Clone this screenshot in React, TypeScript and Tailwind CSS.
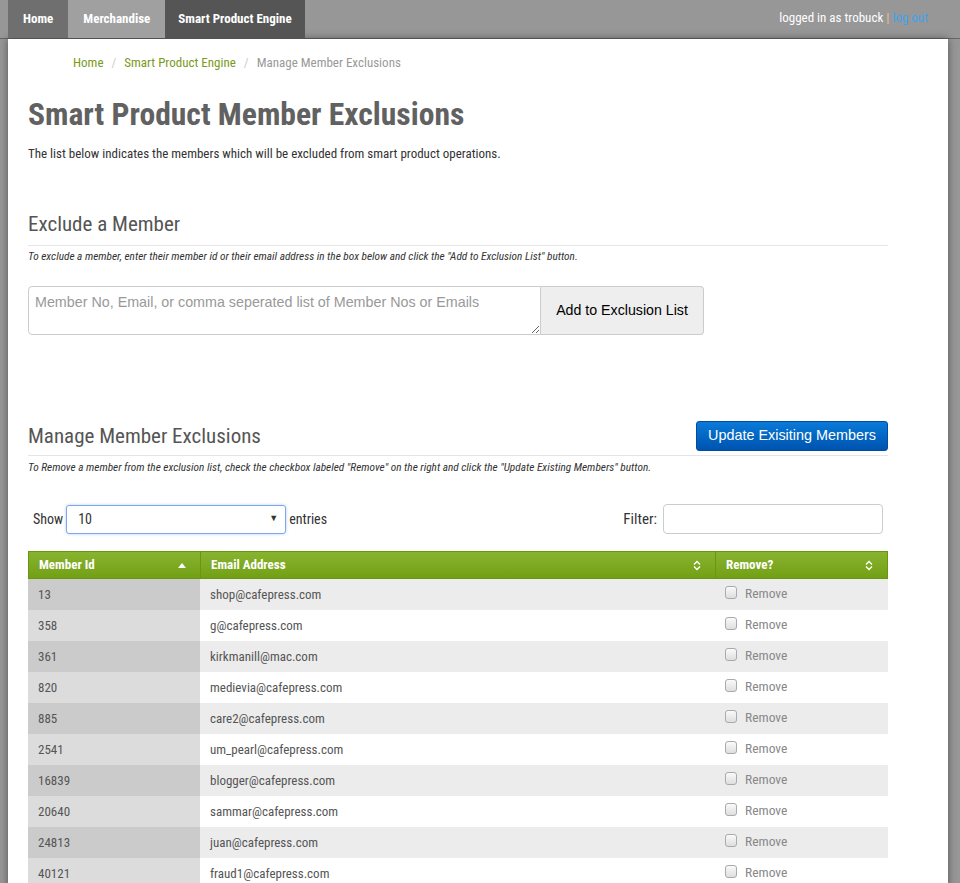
import React from "react";

const rows: [string, string][] = [
  ["13", "shop@cafepress.com"],
  ["358", "g@cafepress.com"],
  ["361", "kirkmanill@mac.com"],
  ["820", "medievia@cafepress.com"],
  ["885", "care2@cafepress.com"],
  ["2541", "um_pearl@cafepress.com"],
  ["16839", "blogger@cafepress.com"],
  ["20640", "sammar@cafepress.com"],
  ["24813", "juan@cafepress.com"],
  ["40121", "fraud1@cafepress.com"],
];

const cond = "font-['Roboto_Condensed','Roboto',sans-serif]";
const arial = "font-['Liberation_Sans',Arial,sans-serif]";

function SortBoth() {
  return (
    <svg width="8" height="11" viewBox="0 0 8 11" className="shrink-0">
      <path d="M1 4.5 L4 1.5 L7 4.5" fill="none" stroke="#fff" strokeWidth="1.3" />
      <path d="M1 6.5 L4 9.5 L7 6.5" fill="none" stroke="#fff" strokeWidth="1.3" />
    </svg>
  );
}

export default function App() {
  return (
    <div className={`min-h-[883px] bg-[#979797] ${cond}`}>
      {/* Top nav */}
      <div className="h-[39px] flex items-stretch justify-between border-b border-[#666] bg-[#979797]">
        <div className="flex pl-[8px]">
          <div className="px-[15px] flex items-center bg-[#6f6f6f] text-white text-[13px] font-bold">Home</div>
          <div className="px-[15px] flex items-center bg-[#a0a0a0] text-white text-[13px] font-bold">Merchandise</div>
          <div className="px-[13px] flex items-center bg-[#555555] text-white text-[13px] font-bold">Smart Product Engine</div>
        </div>
        <div className="flex items-center pr-[32px] text-[13px] text-white pb-[2px]">
          <span>logged in as trobuck</span>
          <span className="text-[#e8c68a] mx-[3px]">|</span>
          <span className="text-[#3ba4f0]">log out</span>
        </div>
      </div>

      {/* Container */}
      <div className="ml-[8px] mr-[12px] bg-white shadow-[0_0_8px_rgba(0,0,0,0.45)] min-h-[844px]">
        <div className="pl-[20px] pr-[60px]">
          {/* breadcrumb */}
          <div className="pt-[15px] pl-[45px] text-[13px] flex items-center gap-[8px] leading-[18px]">
            <span className="text-[#7b9a1c]">Home</span>
            <span className="text-[#cccccc]">/</span>
            <span className="text-[#7b9a1c]">Smart Product Engine</span>
            <span className="text-[#cccccc]">/</span>
            <span className="text-[#999999]">Manage Member Exclusions</span>
          </div>

          <h1 className="mt-[25px] text-[31.6px] font-bold text-[#616161] leading-[36px]">Smart Product Member Exclusions</h1>
          <p className="mt-[13px] text-[13px] text-[#333] leading-[16px]">The list below indicates the members which will be excluded from smart product operations.</p>

          <h2 className="mt-[49px] text-[21px] text-[#555] leading-[26px] pb-[8px] border-b border-[#e5e5e5]">Exclude a Member</h2>
          <p className="mt-[4px] text-[11.3px] italic text-[#333] leading-[14px] whitespace-nowrap">To exclude a member, enter their member id or their email address in the box below and click the "Add to Exclusion List" button.</p>

          <div className="mt-[22px] flex w-[676px] h-[49px]">
            <textarea
              className={`flex-1 h-[49px] border border-[#cccccc] rounded-l-[4px] px-[6px] py-[5px] text-[14.3px] ${arial} placeholder:text-[#999] resize-y outline-none`}
              placeholder="Member No, Email, or comma seperated list of Member Nos or Emails"
            />
            <button className={`w-[163px] h-[49px] bg-[#eeeeee] border border-l-0 border-[#cccccc] rounded-r-[4px] text-[14.2px] text-black ${arial}`}>
              Add to Exclusion List
            </button>
          </div>

          <div className="mt-[86px] flex items-end justify-between border-b border-[#e5e5e5] pb-[4px]">
            <h2 className="text-[21px] text-[#555] leading-[26px] pb-[2px]">Manage Member Exclusions</h2>
            <button className={`w-[192px] h-[30px] rounded-[3px] bg-gradient-to-b from-[#0b7ad8] to-[#0053b0] border border-[#004c9e] text-white text-[14.4px] ${arial}`}>
              Update Exisiting Members
            </button>
          </div>
          <p className="mt-[5px] text-[11.3px] italic text-[#333] leading-[14px] whitespace-nowrap">To Remove a member from the exclusion list, check the checkbox labeled "Remove" on the right and click the "Update Existing Members" button.</p>

          <div className="mt-[29px] flex items-center justify-between px-[5px]">
            <div className="flex items-center gap-[3px] text-[14px] text-[#333]">
              <span>Show</span>
              <div className="w-[220px] h-[29px] border border-[#7fa6ea] rounded-[3px] flex items-center justify-between pl-[11px] pr-[7px] shadow-[0_0_3px_rgba(80,140,230,0.45)]">
                <span className="text-[14px] text-[#333]">10</span>
                <span className="text-[9px] text-[#333]">▼</span>
              </div>
              <span>entries</span>
            </div>
            <div className="flex items-center gap-[6px] text-[15px] text-[#333]">
              <span>Filter:</span>
              <div className="w-[220px] h-[30px] border border-[#cccccc] rounded-[4px]" />
            </div>
          </div>

          {/* table */}
          <div className="mt-[17px] w-[860px] text-[13px]">
            <div className="flex h-[28px] bg-gradient-to-b from-[#88b32f] to-[#72a013] border border-[#6a9510] text-white font-bold text-[13px]">
              <div className="w-[172px] flex items-center justify-between pl-[10px] pr-[14px] border-r border-[#6a9510]">
                <span>Member Id</span>
                <svg width="8" height="5" viewBox="0 0 8 5"><path d="M0 5 L4 0 L8 5 Z" fill="#fff" /></svg>
              </div>
              <div className="w-[515px] flex items-center justify-between pl-[10px] pr-[14px] border-r border-[#6a9510]">
                <span>Email Address</span>
                <SortBoth />
              </div>
              <div className="flex-1 flex items-center justify-between pl-[10px] pr-[14px]">
                <span>Remove?</span>
                <SortBoth />
              </div>
            </div>
            {rows.map(([id, email], i) => {
              const odd = i % 2 === 0;
              return (
                <div key={id} className={`flex h-[31px] text-[#555] ${odd ? "bg-[#ececec]" : "bg-white"}`}>
                  <div className={`w-[172px] flex items-center pl-[10px] ${odd ? "bg-[#cbcbcb]" : "bg-[#dcdcdc]"}`}>{id}</div>
                  <div className="w-[515px] flex items-center pl-[10px]">{email}</div>
                  <div className="flex-1 flex items-start pt-[4px] pl-[10px] gap-[8px]">
                    <span className="mt-[3px] w-[12px] h-[13px] rounded-[3px] border border-[#aaa] bg-gradient-to-b from-[#fafafa] to-[#dedede]" />
                    <span className="text-[#888] text-[13.5px]">Remove</span>
                  </div>
                </div>
              );
            })}
          </div>
        </div>
      </div>
    </div>
  );
}
